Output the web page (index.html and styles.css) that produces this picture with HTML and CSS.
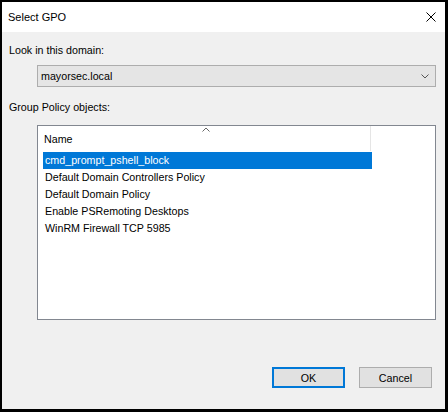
FILE: index.html
```html
<!DOCTYPE html>
<html>
<head>
<meta charset="utf-8">
<link rel="stylesheet" href="styles.css">
</head>
<body>
<div class="window">
  <div class="titlebar">
    <span class="title">Select GPO</span>
    <svg class="close" width="10" height="10" viewBox="0 0 10 10"><path d="M0.5 0.5 L9.5 9.5 M9.5 0.5 L0.5 9.5" stroke="#000" stroke-width="1" fill="none"/></svg>
  </div>
  <div class="content">
    <div class="label first">Look in this domain:</div>
    <div class="combo">
      <span class="combo-text">mayorsec.local</span>
      <svg class="chev" width="8" height="5" viewBox="0 0 8 5"><path d="M0.5 0.5 L4 4 L7.5 0.5" stroke="#555" stroke-width="1" fill="none"/></svg>
    </div>
    <div class="label second">Group Policy objects:</div>
    <div class="list">
      <div class="header">
        <div class="col">
          <svg class="sort" width="8" height="5" viewBox="0 0 8 5"><path d="M0.5 4.5 L4 1 L7.5 4.5" stroke="#666" stroke-width="1" fill="none"/></svg>
          <span>Name</span>
        </div>
      </div>
      <div class="rows">
        <div class="row selected">cmd_prompt_pshell_block</div>
        <div class="row">Default Domain Controllers Policy</div>
        <div class="row">Default Domain Policy</div>
        <div class="row">Enable PSRemoting Desktops</div>
        <div class="row">WinRM Firewall TCP 5985</div>
      </div>
    </div>
    <div class="buttons">
      <div class="btn default">OK</div>
      <div class="btn">Cancel</div>
    </div>
  </div>
</div>
</body>
</html>
```
FILE: styles.css
```css
html, body {
  margin: 0;
  padding: 0;
  background: #000;
  width: 448px;
  height: 412px;
  overflow: hidden;
}
body {
  font-family: "Liberation Sans", Arial, sans-serif;
  font-size: 10.7px;
  color: #000;
}
.window {
  margin: 2px 3px 3px 2px;
  width: 443px;
  height: 407px;
  display: flex;
  flex-direction: column;
  background: #f0f0f0;
}
.titlebar {
  height: 30px;
  background: #fff;
  display: flex;
  align-items: center;
  justify-content: space-between;
  padding: 0 9px 0 6px;
}
.title {
  font-size: 11px;
  line-height: 16px;
  margin-top: -1px;
}
.close {
  display: block;
  margin-top: -1px;
}
.content {
  flex: 1;
  display: flex;
  flex-direction: column;
}
.label {
  line-height: 16px;
  padding-left: 7px;
}
.label.first { margin-top: 10px; }
.label.second { margin-top: 12px; }
.combo {
  margin: 7px 9px 0 35px;
  height: 20px;
  border: 1px solid #adadad;
  background: #e5e5e5;
  display: flex;
  align-items: center;
  justify-content: space-between;
  padding: 0 6px 0 3px;
}
.combo-text { line-height: 16px; }
.chev { display: block; }
.list {
  margin: 10px 9px 0 35px;
  height: 193px;
  border: 1px solid #828790;
  background: #fff;
}
.header {
  height: 25px;
  display: flex;
}
.col {
  position: relative;
  width: 333px;
  border-right: 1px solid #e5e5e5;
  display: flex;
  align-items: center;
  padding-left: 6px;
  box-sizing: border-box;
}
.col span { line-height: 16px; }
.sort {
  position: absolute;
  top: 1px;
  left: 164px;
}
.rows {
  padding-left: 5px;
  padding-top: 1px;
}
.row {
  width: 329px;
  height: 17px;
  line-height: 17px;
  padding-left: 2px;
  box-sizing: border-box;
  white-space: nowrap;
}
.row.selected {
  background: #0078d7;
  color: #fff;
}
.buttons {
  margin-top: 47px;
  display: flex;
  justify-content: flex-end;
  gap: 14px;
  padding-right: 13px;
}
.btn {
  width: 73px;
  height: 21px;
  box-sizing: border-box;
  border: 1px solid #adadad;
  background: #e1e1e1;
  display: flex;
  align-items: center;
  justify-content: center;
}
.btn.default {
  border: 2px solid #0078d7;
}
```
